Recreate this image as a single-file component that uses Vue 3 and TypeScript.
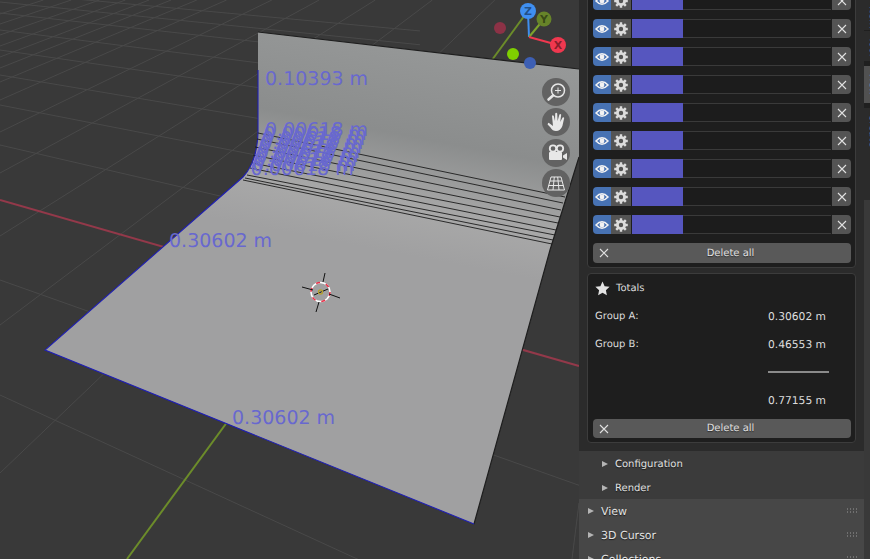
<template>
  <div class="screen">
    <svg class="scene" viewBox="0 0 870 559" width="870" height="559">
      <defs>
        <linearGradient id="mesh" gradientUnits="userSpaceOnUse" x1="420" y1="40" x2="380" y2="250">
          <stop offset="0" stop-color="#969898" />
          <stop offset="0.45" stop-color="#8b8d8d" />
          <stop offset="0.78" stop-color="#a8a8a8" />
          <stop offset="1" stop-color="#a0a0a1" />
        </linearGradient>
      </defs>

      <!-- floor grid -->
      <line v-for="(g, i) in gridLines" :key="i" :x1="g.x1" :y1="g.y1" :x2="g.x2" :y2="g.y2" class="grid" />
      <line x1="0" y1="200" x2="579" y2="366" class="axis-x" />
      <line x1="127" y1="559" x2="530" y2="8" class="axis-y" />

      <!-- the swept surface -->
      <path
        d="M258 32 L579 69 L579 157 L550 250 L474 524 L45 350 L243 177 Q257 162 258 133 Z"
        fill="url(#mesh)"
      />
      <path d="M258 32 L579 69 M579 157 L550 250 L474 524" class="edge-dark" />
      <path d="M474 524 L45 350 L243 177 Q257 162 258 133 L258 70" class="edge-blue" />
      <line v-for="(l, i) in sweepLines" :key="'s' + i" :x1="l[0]" :y1="l[1]" :x2="l[2]" :y2="l[3]" class="sweep" />

      <!-- measures -->
      <text x="265" y="85" class="measure">0.10393 m</text>
      <text
        v-for="(s, i) in stackedLabels"
        :key="'m' + i"
        :x="s.x"
        :y="s.y"
        class="measure"
      >0.00618 m</text>
      <text x="169" y="247" class="measure">0.30602 m</text>
      <text x="232" y="424" class="measure">0.30602 m</text>

      <!-- 3d cursor -->
      <g fill="none">
        <circle cx="320.5" cy="292" r="9.5" stroke="#fff" stroke-width="1.6" />
        <circle cx="320.5" cy="292" r="9.5" stroke="#e8324a" stroke-width="1.6" stroke-dasharray="4 6" />
        <path d="M302 287 L313 290 M340 298 L329 294 M325 273 L323 282 M316 312 L319 302 M314 295 L328 289" stroke="#111" stroke-width="1" />
        <circle cx="320.5" cy="292" r="2" stroke="#b5a030" stroke-width="1.3" />
      </g>

      <!-- orientation gizmo -->
      <g>
        <circle cx="500" cy="28" r="6" fill="#8c3246" />
        <circle cx="513" cy="54" r="6" fill="#7fd000" />
        <circle cx="530" cy="63" r="6" fill="#3d5fb4" />
        <line x1="529" y1="37" x2="528" y2="12" stroke="#3f8ff0" stroke-width="2" />
        <line x1="529" y1="37" x2="544" y2="19" stroke="#7da22c" stroke-width="2" />
        <line x1="529" y1="37" x2="558" y2="45" stroke="#f0384f" stroke-width="2" />
        <circle cx="544" cy="19" r="7.5" fill="#678429" />
        <circle cx="528" cy="11" r="8" fill="#3f8ff0" />
        <circle cx="558" cy="45" r="8" fill="#f0384f" />
        <text x="544" y="23" class="gizmo-label">Y</text>
        <text x="528" y="15" class="gizmo-label">Z</text>
        <text x="558" y="49" class="gizmo-label">X</text>
      </g>

      <!-- viewport nav buttons -->
      <g>
        <circle cx="556" cy="92" r="14" class="nav" />
        <circle cx="558" cy="90.5" r="6.5" fill="none" stroke="#e6e6e6" stroke-width="1.5" />
        <path d="M555 90.5 h6 M558 87.5 v6" stroke="#e6e6e6" stroke-width="1" />
        <path d="M553 95.5 L548.5 99.5" stroke="#e6e6e6" stroke-width="2.6" stroke-linecap="round" />

        <circle cx="556" cy="122" r="14" class="nav" />
        <path
          d="M549 123 L553 126 L552 116 Q552.8 114.6 553.8 116 L555 121 L555.2 113.5 Q556.2 112 557.2 113.5 L557.6 121 L559.4 114.5 Q560.5 113.4 561.2 114.8 L560.2 122 L562.6 117.5 Q563.8 116.8 564.2 118 L562.4 126 Q560.5 131 556 131 Q552.5 131 550.5 127.5 L547.6 124.4 Q548 122.4 549 123 Z"
          fill="#e8e8e8"
        />

        <circle cx="556" cy="153" r="14" class="nav" />
        <circle cx="553" cy="148.5" r="3.2" fill="none" stroke="#e8e8e8" stroke-width="1.8" />
        <circle cx="560" cy="148.5" r="3.2" fill="none" stroke="#e8e8e8" stroke-width="1.8" />
        <rect x="549" y="152" width="13" height="8" rx="1" fill="#e8e8e8" />
        <path d="M563 155.5 L567 153 V160 L563 157.5 Z" fill="#e8e8e8" />

        <circle cx="556" cy="183" r="14" class="nav" />
        <path
          d="M551 177 H561 L564.5 190 H547.5 Z M549.8 181 H562.2 M548.6 185.5 H563.4 M554.3 177 L553 190 M557.7 177 L559 190"
          fill="none"
          stroke="#e8e8e8"
          stroke-width="1"
        />
      </g>
    </svg>

    <aside class="sidebar">
      <div class="panels">
        <section class="addon">
          <div class="box rows">
            <div v-for="n in 9" :key="n" class="row">
              <span class="cell eye">
                <svg width="14" height="10" viewBox="0 0 14 10">
                  <path d="M1 5 Q7 -1.4 13 5 Q7 11.4 1 5 Z" fill="none" stroke="#f2f2f2" stroke-width="1.5" />
                  <circle cx="7" cy="5" r="2.4" fill="#f2f2f2" />
                </svg>
              </span>
              <span class="cell gear">
                <svg width="14" height="14" viewBox="0 0 14 14">
                  <path :d="gearPath" fill="#dcdcdc" fill-rule="evenodd" />
                </svg>
              </span>
              <span class="swatch"></span>
              <span class="field"></span>
              <span class="cell remove">
                <svg width="10" height="10" viewBox="0 0 10 10">
                  <path d="M1 1 L9 9 M9 1 L1 9" stroke="#e0e0e0" stroke-width="1.1" />
                </svg>
              </span>
            </div>
            <button class="delete-all first">
              <svg width="10" height="10" viewBox="0 0 10 10">
                <path d="M1 1 L9 9 M9 1 L1 9" stroke="#e0e0e0" stroke-width="1.1" />
              </svg>
              <span>Delete all</span>
            </button>
          </div>

          <div class="box totals">
            <div class="totals-title">
              <svg width="15" height="15" viewBox="0 0 15 15">
                <path d="M7.5 .6 L9.6 5.2 L14.6 5.8 L10.9 9.2 L11.9 14.2 L7.5 11.7 L3.1 14.2 L4.1 9.2 L.4 5.8 L5.4 5.2 Z" fill="#e4e4e4" />
              </svg>
              <span>Totals</span>
            </div>
            <div class="totals-grid">
              <span>Group A:</span><span class="value">0.30602 m</span>
              <span>Group B:</span><span class="value">0.46553 m</span>
              <span></span><span class="sum-rule"></span>
              <span></span><span class="value">0.77155 m</span>
            </div>
            <button class="delete-all">
              <svg width="10" height="10" viewBox="0 0 10 10">
                <path d="M1 1 L9 9 M9 1 L1 9" stroke="#e0e0e0" stroke-width="1.1" />
              </svg>
              <span>Delete all</span>
            </button>
          </div>
        </section>

        <section class="subpanels">
          <div v-for="s in subPanels" :key="s" class="heading sub">
            <i class="tri"></i><span>{{ s }}</span>
          </div>
        </section>

        <section class="mainpanels">
          <div v-for="s in mainPanels" :key="s" class="heading main">
            <i class="tri"></i><span>{{ s }}</span>
            <svg class="grip" width="13" height="6" viewBox="0 0 13 6">
              <path d="M1 1h1M4 1h1M7 1h1M10 1h1M1 4h1M4 4h1M7 4h1M10 4h1" stroke="#9a9a9a" stroke-width="1" />
            </svg>
          </div>
        </section>
      </div>

      <nav class="tabs">
        <span class="tab">Item</span>
        <span class="tab">Tool</span>
        <span class="tab active">View</span>
        <span class="tab last">Create</span>
      </nav>
    </aside>
  </div>
</template>

<script setup lang="ts">
const subPanels = ['Configuration', 'Render']
const mainPanels = ['View', '3D Cursor', 'Collections']

// perspective grid: every line runs to one of two vanishing points
const vpA = { x: -1100, y: -110 }
const vpB = { x: 725, y: -220 }
const aIntercepts = [-8, 2, 13, 30, 50, 75, 105, 145, 280, 395]
const bIntercepts = [14, 24, 35, 46, 57, 68, 82, 100, 132, 173, 236, 325, 473]

const gridLines = [
  ...aIntercepts.map((y0) => {
    const slope = (y0 - vpA.y) / -vpA.x
    const end = y0 < 200 ? 420 : 870
    return { x1: 0, y1: y0, x2: end, y2: y0 + slope * end }
  }),
  ...bIntercepts.map((y0) => {
    const slope = (vpB.y - y0) / vpB.x
    return { x1: 0, y1: y0, x2: -y0 / slope, y2: 0 }
  }),
  { x1: 572, y1: 559, x2: 579, y2: 503 },
]

const sweepLines: number[][] = [
  [258, 133, 565, 197],
  [257, 139, 563, 203],
  [255, 147, 561, 210],
  [253, 155, 560, 217],
  [252, 163, 558, 223],
  [250, 168, 556, 230],
  [247, 175, 555, 235],
  [245, 178, 553, 240],
  [243, 180, 552, 244],
]

const stackedLabels = Array.from({ length: 10 }, (_, i) => ({
  x: 265 - i * 1.6,
  y: 136 + i * 4.35,
}))

function buildGear(): string {
  const cx = 7
  const cy = 7
  const teeth = 8
  const pts: string[] = []
  for (let i = 0; i < teeth; i++) {
    const a = (i / teeth) * Math.PI * 2
    const w = 0.24
    const step = [
      [a - 0.39 + 0.02, 5],
      [a - w, 5],
      [a - w + 0.06, 6.9],
      [a + w - 0.06, 6.9],
      [a + w, 5],
    ]
    for (const [t, r] of step) {
      pts.push(`${(cx + Math.cos(t) * r).toFixed(2)} ${(cy + Math.sin(t) * r).toFixed(2)}`)
    }
  }
  const outer = 'M' + pts.join(' L') + ' Z'
  const hole = `M${cx - 2.2} ${cy} a2.2 2.2 0 1 0 4.4 0 a2.2 2.2 0 1 0 -4.4 0 Z`
  return outer + ' ' + hole
}

const gearPath = buildGear()
</script>

<style scoped>
.screen {
  position: relative;
  width: 870px;
  height: 559px;
  overflow: hidden;
  background: #393939;
  font-family: 'DejaVu Sans', sans-serif;
  font-size: 10px;
  color: #dcdcdc;
  text-rendering: geometricPrecision;
}

.scene {
  position: absolute;
  inset: 0;
}

.grid {
  stroke: #494949;
  stroke-width: 1;
}
.axis-x {
  stroke: #93394a;
  stroke-width: 2;
}
.axis-y {
  stroke: #6c8c2a;
  stroke-width: 2;
}
.edge-dark {
  fill: none;
  stroke: #1e1e1e;
  stroke-width: 1.2;
}
.edge-blue {
  fill: none;
  stroke: #1f1fb4;
  stroke-width: 1.1;
}
.sweep {
  stroke: #1c1c1c;
  stroke-width: 0.9;
}
.measure {
  font-family: 'DejaVu Sans', sans-serif;
  font-size: 19px;
  fill: #6868cf;
}
.gizmo-label {
  font-family: 'DejaVu Sans', sans-serif;
  font-size: 11px;
  font-weight: 700;
  text-anchor: middle;
  fill: rgba(0, 0, 0, 0.45);
}
.nav {
  fill: #626262;
}

/* right hand region */
.sidebar {
  position: absolute;
  top: 0;
  right: 0;
  bottom: 0;
  width: 291px;
  display: flex;
}

.panels {
  width: 285px;
  display: flex;
  flex-direction: column;
}

.addon {
  flex: none;
  background: #2b2b2b;
  padding: 0 8px 8px;
  height: 451px;
  box-sizing: border-box;
  display: flex;
  flex-direction: column;
  gap: 5px;
}

.box {
  background: #1e1e1e;
  border: 1px solid #3c3c3c;
  border-radius: 4px;
  box-sizing: border-box;
  padding: 0 4px 0 5px;
}

.rows {
  flex: none;
  margin-top: -14px;
  padding-top: 4px;
  padding-bottom: 4px;
  display: flex;
  flex-direction: column;
  gap: 9px;
}

.row {
  display: flex;
  flex: none;
  height: 19px;
  border-radius: 4px;
  overflow: hidden;
}

.cell {
  display: flex;
  align-items: center;
  justify-content: center;
  flex: none;
}
.eye {
  width: 18px;
  background: #4772b3;
}
.gear {
  width: 20px;
  background: #545454;
}
.swatch {
  width: 51px;
  margin-left: 1px;
  background: #5656bf;
}
.field {
  flex: 1;
  background: #1c1c1c;
  border: 1px solid #3a3a3a;
  border-left: 0;
  border-right: 0;
}
.remove {
  width: 19px;
  margin-left: 1px;
  background: #545454;
}

.delete-all {
  position: relative;
  display: flex;
  flex: none;
  align-items: center;
  justify-content: center;
  height: 19px;
  width: 100%;
  padding: 0 0 0 17px;
  border: 0;
  border-radius: 4px;
  background: #595959;
  color: #e0e0e0;
  font: inherit;
  text-rendering: inherit;
  text-shadow: 0 1px 1px rgba(0, 0, 0, 0.5);
}
.delete-all.first {
  height: 20px;
}
.delete-all svg {
  position: absolute;
  left: 6px;
  top: 5px;
}

.totals {
  flex: 1;
  display: flex;
  flex-direction: column;
  padding-bottom: 4px;
}
.totals-title {
  display: flex;
  align-items: center;
  gap: 6px;
  height: 28px;
  padding-left: 2px;
}
.totals-grid {
  padding-left: 2px;
  display: grid;
  grid-template-columns: 173px 61px;
  grid-auto-rows: 28px;
  align-items: center;
}
.value {
  font-size: 10.7px;
}
.sum-rule {
  height: 2px;
  background: #8a8a8a;
}
.totals .delete-all {
  margin-top: auto;
}

.subpanels {
  flex: none;
  height: 48px;
  background: #3b3b3b;
}
.mainpanels {
  flex: 1;
  background: #474747;
  font-size: 11px;
}

.heading {
  display: flex;
  align-items: center;
  height: 24px;
  box-sizing: border-box;
  color: #e2e2e2;
  text-shadow: 0 1px 1px rgba(0, 0, 0, 0.6);
}
.heading.sub {
  padding-left: 23px;
  padding-top: 2px;
}
.heading.main {
  padding-left: 9px;
}
.tri {
  width: 0;
  height: 0;
  margin-right: 7px;
  border-left: 6px solid #b4b4b4;
  border-top: 3.5px solid transparent;
  border-bottom: 3.5px solid transparent;
}
.grip {
  margin-left: auto;
  margin-right: 5px;
}

/* tab strip, almost entirely off the right edge of the shot */
.tabs {
  width: 6px;
  height: 200px;
  overflow: hidden;
  background: #1f1f1f;
  display: flex;
  flex-direction: column;
  gap: 1px;
}
.tab {
  flex: none;
  display: block;
  box-sizing: border-box;
  width: 24px;
  height: 30px;
  padding-left: 3px;
  padding-top: 6px;
  background: #2b2b2b;
  color: #cfcfcf;
  writing-mode: vertical-lr;
  white-space: nowrap;
  overflow: hidden;
}
.tab.active {
  height: 37px;
  background: #515151;
  margin-top: 4px;
  margin-bottom: 4px;
}
.tab.last {
  height: 92px;
}
</style>

<style>
html,
body {
  margin: 0;
  background: #393939;
}
</style>
